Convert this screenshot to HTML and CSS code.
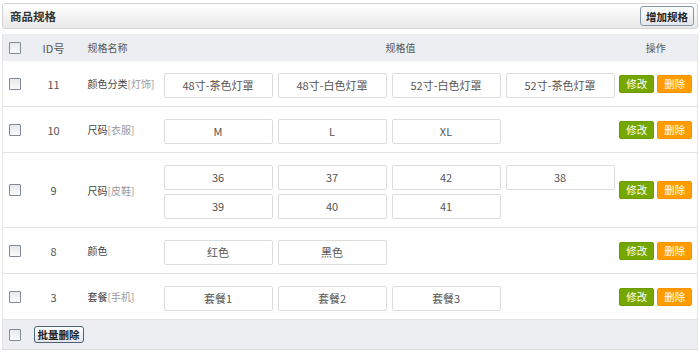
FILE: index.html
```html
<!DOCTYPE html>
<html lang="zh-CN">
<head>
  <meta charset="UTF-8">
  <title>商品规格</title>
  <link rel="stylesheet" href="styles.css">
</head>
<body>

  <div class="panel-head">
    <span class="panel-title">商品规格</span>
    <button class="btn-plain">增加规格</button>
  </div>

  <table class="spec-table">
    <colgroup>
      <col class="w-check">
      <col class="w-id">
      <col class="w-name">
      <col class="w-vals">
      <col class="w-ops">
    </colgroup>
    <thead>
      <tr>
        <th class="c-check"><input type="checkbox" class="chk"></th>
        <th class="c-id">ID号</th>
        <th class="c-name">规格名称</th>
        <th class="c-vals">规格值</th>
        <th class="c-ops">操作</th>
      </tr>
    </thead>
    <tbody>
      <tr>
        <td class="c-check"><input type="checkbox" class="chk"></td>
        <td class="c-id">11</td>
        <td class="c-name">颜色分类<span class="tag">[灯饰]</span></td>
        <td class="c-vals">
          <div class="vals">
            <span class="val">48寸-茶色灯罩</span>
            <span class="val">48寸-白色灯罩</span>
            <span class="val">52寸-白色灯罩</span>
            <span class="val">52寸-茶色灯罩</span>
          </div>
        </td>
        <td class="c-ops"><a class="op op-edit">修改</a><a class="op op-del">删除</a></td>
      </tr>
      <tr>
        <td class="c-check"><input type="checkbox" class="chk"></td>
        <td class="c-id">10</td>
        <td class="c-name">尺码<span class="tag">[衣服]</span></td>
        <td class="c-vals">
          <div class="vals">
            <span class="val">M</span>
            <span class="val">L</span>
            <span class="val">XL</span>
          </div>
        </td>
        <td class="c-ops"><a class="op op-edit">修改</a><a class="op op-del">删除</a></td>
      </tr>
      <tr>
        <td class="c-check"><input type="checkbox" class="chk"></td>
        <td class="c-id">9</td>
        <td class="c-name">尺码<span class="tag">[皮鞋]</span></td>
        <td class="c-vals">
          <div class="vals">
            <span class="val">36</span>
            <span class="val">37</span>
            <span class="val">42</span>
            <span class="val">38</span>
            <span class="val">39</span>
            <span class="val">40</span>
            <span class="val">41</span>
          </div>
        </td>
        <td class="c-ops"><a class="op op-edit">修改</a><a class="op op-del">删除</a></td>
      </tr>
      <tr>
        <td class="c-check"><input type="checkbox" class="chk"></td>
        <td class="c-id">8</td>
        <td class="c-name">颜色</td>
        <td class="c-vals">
          <div class="vals">
            <span class="val">红色</span>
            <span class="val">黑色</span>
          </div>
        </td>
        <td class="c-ops"><a class="op op-edit">修改</a><a class="op op-del">删除</a></td>
      </tr>
      <tr>
        <td class="c-check"><input type="checkbox" class="chk"></td>
        <td class="c-id">3</td>
        <td class="c-name">套餐<span class="tag">[手机]</span></td>
        <td class="c-vals">
          <div class="vals">
            <span class="val">套餐1</span>
            <span class="val">套餐2</span>
            <span class="val">套餐3</span>
          </div>
        </td>
        <td class="c-ops"><a class="op op-edit">修改</a><a class="op op-del">删除</a></td>
      </tr>
    </tbody>
    <tfoot>
      <tr>
        <td class="c-check"><input type="checkbox" class="chk"></td>
        <td colspan="4" class="c-batch"><button class="btn-plain btn-batch">批量删除</button></td>
      </tr>
    </tfoot>
  </table>

</body>
</html>
```

FILE: styles.css
```css
body {
  margin: 0;
  padding: 3px 2px 0;
  background: #fff;
  font-family: "Noto Sans CJK SC", "Microsoft YaHei", sans-serif;
  font-size: 10px;
  color: #555;
}

.panel-head {
  display: flex;
  align-items: center;
  justify-content: space-between;
  height: 24px;
  padding: 0 3px 0 7px;
  border: 1px solid #d3d3d3;
  border-radius: 3px;
  background: linear-gradient(#fff, #e9e9e9);
}
.panel-title {
  font-size: 11.5px;
  font-weight: bold;
  color: #333;
}
.btn-plain {
  height: 20px;
  padding: 0 5px;
  border: 1px solid #8796a8;
  border-radius: 3px;
  background: linear-gradient(#fdfdfd, #e2e6ec);
  font-family: inherit;
  font-size: 10.5px;
  font-weight: bold;
  color: #222;
  line-height: 17px;
}

.spec-table {
  width: 696px;
  margin-top: 5px;
  border-collapse: collapse;
  table-layout: fixed;
  border-left: 1px solid #e6e6e6;
  border-right: 1px solid #e6e6e6;
}
.w-check { width: 28px; }
.w-id { width: 46px; }
.w-name { width: 84px; }
.w-vals { width: 454px; }

.spec-table th {
  height: 27px;
  padding: 0;
  background: #edeef1;
  font-weight: normal;
  color: #555;
}
.spec-table td {
  padding: 8px 0;
  vertical-align: middle;
  border-bottom: 1px solid #e3e3e3;
}
.c-check { text-align: left; padding-left: 6px !important; }
.c-id { text-align: center; font-size: 11px; }
.c-name { text-align: left; padding-left: 11px !important; color: #444; white-space: nowrap; }
th.c-vals { text-align: left; padding-left: 225px !important; }
td.c-vals { padding-left: 3px !important; }
.c-ops { text-align: center; white-space: nowrap; }

.tag { color: #999; }

.chk {
  appearance: none;
  display: block;
  width: 12px;
  height: 12px;
  margin: 0;
  border: 1px solid #7c8a99;
  border-radius: 1px;
  background: linear-gradient(#e6e8eb, #fbfbfb);
}

.vals {
  display: flex;
  flex-wrap: wrap;
  column-gap: 5px;
  row-gap: 4px;
  padding-top: 4px;
}
.val {
  box-sizing: border-box;
  width: 109px;
  height: 25px;
  line-height: 23px;
  border: 1px solid #dcdcdc;
  border-radius: 2px;
  text-align: center;
  font-size: 11px;
  color: #555;
}

.op {
  display: inline-block;
  box-sizing: border-box;
  width: 35px;
  height: 18px;
  line-height: 16px;
  border: 1px solid;
  border-radius: 2px;
  color: #fff;
  font-size: 10.5px;
  text-align: center;
}
.op-edit { background: #76a700; border-color: #6c9a00; margin-right: 3px; }
.op-del { background: #ff9c00; border-color: #f59300; }

.spec-table tfoot td {
  height: 29px;
  padding: 0;
  background: #edeef1;
  border-bottom: 1px solid #dcdcdc;
}
.c-batch { padding-left: 3px !important; }
.btn-batch {
  height: 17px;
  padding: 0 3px;
  border-color: #4a6278;
  line-height: 14px;
}
```
